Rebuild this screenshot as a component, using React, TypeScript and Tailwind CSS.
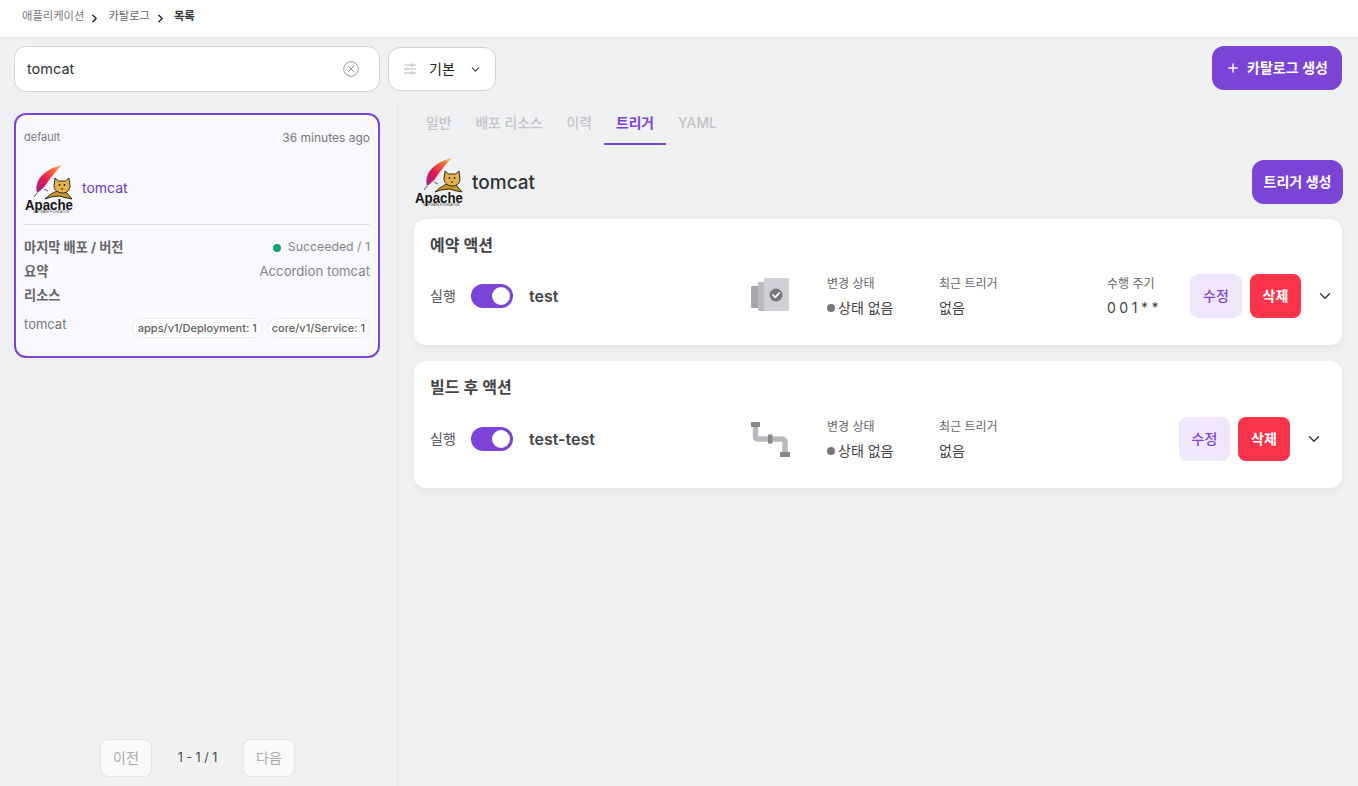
import { ChevronDown, ChevronRight, Plus } from "lucide-react";

const tabs = ["일반", "배포 리소스", "이력", "트리거", "YAML"];

function ApacheLogo({ className, id }: { className: string; id: string }) {
  return (
    <svg viewBox="0 0 50 50" className={`${className} overflow-visible`} aria-hidden="true">
      <defs>
        <linearGradient id={id} x1="0" y1="1" x2="1" y2="0">
          <stop offset="0" stopColor="#8e2a8c" />
          <stop offset="0.4" stopColor="#e8174f" />
          <stop offset="0.75" stopColor="#f2703c" />
          <stop offset="1" stopColor="#f9d27a" />
        </linearGradient>
      </defs>
      <path d="M38 1C28 3 18 9 14 17c-2 4-2 8-1 12 4-3 7-5 10-10 4-6 10-13 15-18Z" fill={`url(#${id})`} />
      <path d="M13 29l-3 4M20 25l4 2" stroke="#333" strokeWidth="0.8" fill="none" />
      <path
        d="M33 27c-5 2-9 5-12 8l6-2 8-1 8 2 5 1-6-7Z"
        fill="#c9962a"
        stroke="#1d1a12"
        strokeWidth="0.9"
        strokeLinejoin="round"
      />
      <path
        d="M31 14l3.500 3h7l3.500-3 1 8c0 4-3 7-7.500 7S30 26 30 22Z"
        fill="#e3b24a"
        stroke="#1d1a12"
        strokeWidth="0.9"
        strokeLinejoin="round"
      />
      <circle cx="35.500" cy="21" r="0.9" fill="#1d1a12" />
      <circle cx="40.500" cy="21" r="0.9" fill="#1d1a12" />
      <path d="M36.500 24.500h3L38 26Z" fill="#1d1a12" />
      <text x="25" y="45.500" textAnchor="middle" fontFamily="'Liberation Sans', sans-serif" fontWeight="700" fontSize="15" textLength="48" lengthAdjust="spacingAndGlyphs" fill="#111">
        Apache
      </text>
      <text x="27" y="49.300" textAnchor="middle" fontFamily="'Liberation Sans', sans-serif" fontSize="2.800" textLength="36" lengthAdjust="spacingAndGlyphs" fill="#444">
        SOFTWARE FOUNDATION
      </text>
    </svg>
  );
}

function ScheduleIcon() {
  return (
    <svg viewBox="0 0 40 36" className="h-9 w-10 shrink-0" aria-hidden="true">
      <rect x="1" y="8" width="9" height="22" rx="1.500" fill="#a7a7ab" />
      <rect x="8" y="4" width="10" height="29" rx="1" fill="#bcbcc0" />
      <rect x="14" y="0" width="25" height="33" rx="1.500" fill="#d0d0d4" />
      <circle cx="26" cy="17" r="6.500" fill="#77777b" />
      <path d="M23 17l2.200 2.300 4-4.300" fill="none" stroke="#fff" strokeWidth="1.800" strokeLinecap="round" strokeLinejoin="round" />
    </svg>
  );
}

function PipeIcon() {
  return (
    <svg viewBox="0 0 40 36" className="h-9 w-10 shrink-0" aria-hidden="true">
      <path d="M5.500 5v10.500a2.500 2.500 0 0 0 2.500 2.500h24a3 3 0 0 1 3 3v10" fill="none" stroke="#b9b9bd" strokeWidth="5.500" />
      <rect x="1" y="1" width="9" height="5" fill="#88888c" />
      <rect x="18" y="13.500" width="4.500" height="9" fill="#88888c" />
      <rect x="30" y="31" width="10" height="5" fill="#88888c" />
    </svg>
  );
}

function ClearIcon() {
  return (
    <svg viewBox="0 0 16 16" fill="none" stroke="currentColor" strokeWidth="0.9" className="size-4 text-[#8f8f93]" aria-hidden="true">
      <circle cx="8" cy="8" r="7.300" />
      <path d="M4.800 4.800l6.400 6.400M11.200 4.800l-6.400 6.400" />
    </svg>
  );
}

function FilterIcon() {
  return (
    <svg viewBox="0 0 14 14" fill="none" stroke="currentColor" strokeWidth="0.9" className="size-[14px] text-[#b4b4b8]" aria-hidden="true">
      <path d="M1 3h6.500M10 3h3M1 7h2M5.500 7H13M1 11h6.500M10 11h3" />
      <circle cx="8.700" cy="3" r="1.200" />
      <circle cx="4.300" cy="7" r="1.200" />
      <circle cx="8.700" cy="11" r="1.200" />
    </svg>
  );
}

const triggers = [
  {
    section: "예약 액션",
    name: "test",
    icon: <ScheduleIcon />,
    cron: "0 0 1 * *",
    editClass: "w-[52px]",
    deleteClass: "w-[51px]",
    actionsClass: "pr-2",
    sectionClass: "h-[126px]",
    rowClass: "mt-[19px]",
  },
  {
    section: "빌드 후 액션",
    name: "test-test",
    icon: <PipeIcon />,
    cron: null,
    editClass: "w-[51px]",
    deleteClass: "w-[52px]",
    actionsClass: "pr-[19px]",
    sectionClass: "h-[127px]",
    rowClass: "mt-[20px]",
  },
];

export default function App() {
  return (
    <div className="flex h-[786px] flex-col overflow-hidden bg-[#eff0f2] font-['Inter','Noto_Sans_CJK_KR',sans-serif] text-[#333336]">
      <nav className="flex h-[38px] shrink-0 items-center gap-1 border-b border-[#e2e2e5] bg-white pb-1 pl-[22px] text-[11.300px]">
        <span className="text-[#77777b]">애플리케이션</span>
        <ChevronRight className="mt-[3px] size-[13px] text-[#222]" strokeWidth={2.500} />
        <span className="ml-[3px] text-[#66666a]">카탈로그</span>
        <ChevronRight className="mt-[3px] size-[13px] text-[#222]" strokeWidth={2.500} />
        <span className="ml-[3px] font-semibold text-[#333336]">목록</span>
      </nav>

      <div className="flex min-h-0 flex-1 flex-col">
        <header className="flex h-[62px] shrink-0 items-start pl-[14px] pr-4 pt-2">
          <div className="flex h-[46px] w-[366px] items-center justify-between rounded-xl border border-[#d2d2d6] bg-white pl-3 pr-[20px] text-[14.500px]">
            <span>tomcat</span>
            <ClearIcon />
          </div>
          <button className="ml-2 mt-px flex h-[44px] w-[108px] items-center rounded-xl border border-[#d2d2d6] bg-white pl-[14px] text-sm text-[#222]">
            <FilterIcon />
            <span className="ml-[12px]">기본</span>
            <ChevronDown className="ml-[14px] size-[13px] text-[#444]" strokeWidth={2} />
          </button>
          <button className="ml-auto flex h-[44px] w-[130px] items-center justify-center gap-[7px] rounded-xl bg-[#7b43d6] text-sm font-semibold text-white">
            <Plus className="size-[14px]" strokeWidth={2.500} />
            카탈로그 생성
          </button>
        </header>

        <div className="flex min-h-0 flex-1">
          <aside className="flex w-[398px] shrink-0 flex-col border-r border-[#e8e8eb] px-[14px] pt-[13px]">
            <article className="h-[245px] w-[366px] rounded-xl border-2 border-[#7b43d6] bg-[#faf8ff] px-2 pt-2">
              <div className="mt-[6px] flex items-start justify-between text-[#77777b]">
                <span className="text-[11px] leading-[16px]">default</span>
                <span className="text-xs leading-[18px]">36 minutes ago</span>
              </div>
              <div className="mt-[17px] flex h-[50px] items-center gap-2">
                <ApacheLogo id="feather-card" className="size-[50px] shrink-0" />
                <span className="mb-[2px] text-sm text-[#6a3cb5]">tomcat</span>
              </div>
              <div className="mt-[10px] border-t border-[#e2e2e5] pt-[13px] text-[13.200px] leading-[18px] text-[#77777b]">
                <div className="flex justify-between">
                  <strong className="font-bold text-[#66666a]">마지막 배포 / 버전</strong>
                  <span className="flex items-center text-[12.300px] text-[#85858a]">
                    <span className="mr-[7px] mt-px size-2 rounded-full bg-[#12a26b]" />
                    Succeeded / 1
                  </span>
                </div>
                <div className="mt-[6px] flex justify-between">
                  <strong className="font-bold text-[#66666a]">요약</strong>
                  <span className="text-[#85858a]">Accordion tomcat</span>
                </div>
                <strong className="mt-[6px] block font-bold text-[#66666a]">리소스</strong>
                <div className="mt-[11px] flex items-start justify-between">
                  <span className="text-[13px]">tomcat</span>
                  <div className="mt-[3px] flex gap-1 text-[11px] font-medium leading-[18px] text-[#5f5f63]">
                    <span className="rounded-full border border-[#ebebee] bg-white px-[5px]">apps/v1/Deployment: 1</span>
                    <span className="rounded-full border border-[#ebebee] bg-white px-1">core/v1/Service: 1</span>
                  </div>
                </div>
              </div>
            </article>
            <div className="mb-[9px] mt-auto flex items-center justify-center pr-[2px] text-sm">
              <button className="h-[38px] w-[52px] rounded-lg border border-[#e4e4e7] bg-[#fafafa] text-[#a9a9ad]">이전</button>
              <span className="w-[91px] text-center text-[12.500px] text-[#444448]">1 - 1 / 1</span>
              <button className="h-[38px] w-[52px] rounded-lg border border-[#e4e4e7] bg-[#fafafa] text-[#a9a9ad]">다음</button>
            </div>
          </aside>

          <main className="min-w-0 flex-1 pl-4 pr-4">
            <div className="flex h-[45px] items-start text-[13.800px] font-medium text-[#c4c4c8]">
              {tabs.map((tab) => (
                <span
                  key={tab}
                  className={
                    tab === "트리거"
                      ? "h-[45px] border-b-2 border-[#7b43d6] px-3 pt-[13px] font-semibold text-[#7b43d6]"
                      : "h-[45px] px-3 pt-[13px]"
                  }
                >
                  {tab}
                </span>
              ))}
            </div>

            <div className="mt-[12px] flex h-[50px] items-center">
              <ApacheLogo id="feather-head" className="size-[50px] shrink-0" />
              <h1 className="ml-2 mt-[2px] text-[19px] font-medium text-[#333336]">tomcat</h1>
              <button className="ml-auto mr-[-1px] h-[44px] w-[91px] rounded-xl bg-[#7b43d6] text-sm font-semibold text-white">트리거 생성</button>
            </div>

            <div className="mt-[12px] flex flex-col gap-4">
              {triggers.map((t) => (
                <section key={t.name} className={`${t.sectionClass} rounded-xl bg-white pl-4 pt-[16px] shadow-[0_4px_10px_rgba(0,0,0,0.05)]`}>
                  <h2 className="text-base font-semibold leading-[20px] text-[#444448]">{t.section}</h2>
                  <div className={`${t.rowClass} flex h-[44px] items-center`}>
                    <span className="w-[41px] text-sm text-[#55555a]">실행</span>
                    <span className="flex h-6 w-[42px] items-center justify-end rounded-full bg-[#7b43d6] pr-[3px]">
                      <span className="size-[18px] rounded-full bg-white" />
                    </span>
                    <span className="ml-4 w-[221px] text-base font-semibold text-[#444448]">{t.name}</span>
                    {t.icon}
                    <div className="ml-[37px] w-[112px]">
                      <div className="text-xs leading-[18px] text-[#66666a]">변경 상태</div>
                      <div className="mt-[6px] flex items-center text-sm leading-[18px] text-[#444448]">
                        <span className="mr-[3px] size-2 rounded-full bg-[#77777b]" />
                        상태 없음
                      </div>
                    </div>
                    <div className="w-[168px]">
                      <div className="text-xs leading-[18px] text-[#66666a]">최근 트리거</div>
                      <div className="mt-[6px] text-sm leading-[18px] text-[#444448]">없음</div>
                    </div>
                    {t.cron && (
                      <div>
                        <div className="text-xs leading-[18px] text-[#66666a]">수행 주기</div>
                        <div className="mt-[6px] text-sm leading-[18px] tracking-[-0.2px] text-[#444448]">{t.cron}</div>
                      </div>
                    )}
                    <div className={`ml-auto flex items-center gap-2 ${t.actionsClass}`}>
                      <button className={`${t.editClass} h-[44px] rounded-lg bg-[#efe8fc] text-sm font-medium text-[#7b43d6]`}>수정</button>
                      <button className={`${t.deleteClass} h-[44px] rounded-lg bg-[#fb344c] text-sm font-semibold text-white`}>삭제</button>
                      <ChevronDown className="ml-[7px] size-[18px] text-[#333336]" strokeWidth={1.800} />
                    </div>
                  </div>
                </section>
              ))}
            </div>
          </main>
        </div>
      </div>
    </div>
  );
}
